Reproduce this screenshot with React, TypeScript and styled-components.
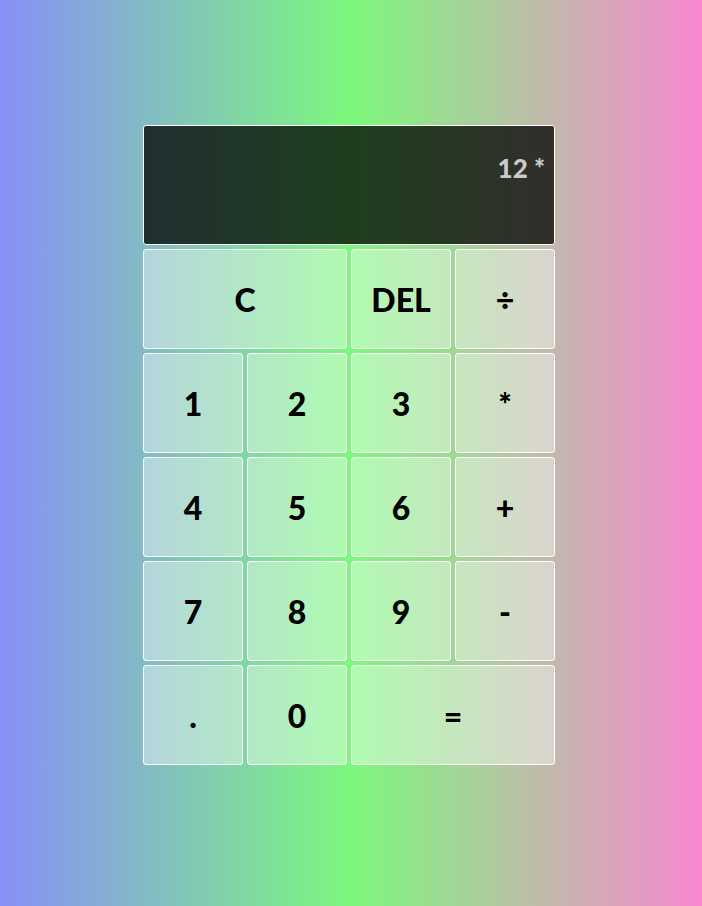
import React from "react";
import styled, { createGlobalStyle } from "styled-components";

const GlobalStyle = createGlobalStyle`
  *, *::before, *::after { box-sizing: border-box; }
  html, body { margin: 0; padding: 0; }
  body {
    min-height: 100vh;
    background: linear-gradient(to right, #8890f8, #7cf87c, #f888d0);
    font-family: "Lato", "Liberation Sans", sans-serif;
  }
`;

const Page = styled.div`
  display: flex;
  justify-content: center;
  padding: 125px 4px 0 0;
  min-height: 906px;
`;

const Grid = styled.div`
  display: grid;
  grid-template-columns: repeat(4, 100px);
  grid-template-rows: 120px repeat(5, 100px);
  gap: 4px;
  align-content: start;
`;

const Display = styled.div`
  grid-column: 1 / -1;
  background: rgba(0, 0, 0, 0.75);
  border: 1px solid #ffffff;
  border-radius: 3px;
  display: flex;
  flex-direction: column;
  align-items: flex-end;
  justify-content: space-around;
  padding: 10px 9px;
  word-break: break-all;
`;

const Previous = styled.div`
  color: rgba(255, 255, 255, 0.75);
  font-size: 26px;
  font-weight: 900;
  line-height: 1.2;
`;

const Current = styled.div`
  color: #ffffff;
  font-size: 40px;
  font-weight: 700;
`;

const Key = styled.button<{ $span?: number }>`
  grid-column: span ${(p) => p.$span ?? 1};
  background: rgba(255, 255, 255, 0.4);
  border: 1px solid #ffffff;
  border-radius: 3px;
  font-family: "Lato", "Liberation Sans", sans-serif;
  font-size: 32px;
  font-weight: 900;
  color: #000000;
  cursor: pointer;
  outline: none;
  padding: 0;
  display: flex;
  align-items: center;
  justify-content: center;
`;

const rows: { label: string; span?: number }[] = [
  { label: "C", span: 2 },
  { label: "DEL" },
  { label: "÷" },
  { label: "1" },
  { label: "2" },
  { label: "3" },
  { label: "*" },
  { label: "4" },
  { label: "5" },
  { label: "6" },
  { label: "+" },
  { label: "7" },
  { label: "8" },
  { label: "9" },
  { label: "-" },
  { label: "." },
  { label: "0" },
  { label: "=", span: 2 },
];

export default function App() {
  return (
    <>
      <GlobalStyle />
      <Page>
        <Grid>
          <Display>
            <Previous>12 *</Previous>
            <Current></Current>
          </Display>
          {rows.map((k) => (
            <Key key={k.label} $span={k.span}>
              {k.label}
            </Key>
          ))}
        </Grid>
      </Page>
    </>
  );
}
